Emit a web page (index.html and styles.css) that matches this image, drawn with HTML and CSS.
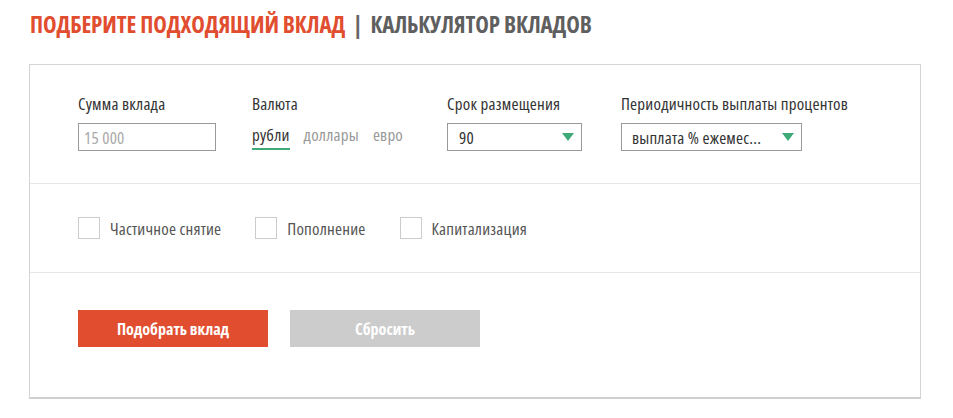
FILE: index.html
```html
<!DOCTYPE html>
<html lang="ru">
<head>
<meta charset="UTF-8" />
<meta name="viewport" content="width=device-width, initial-scale=1" />
<title>Калькулятор вкладов</title>
<link rel="stylesheet" href="styles.css">
</head>
<body>

<div class="page">
  <h1 class="page-title">
    <span class="title-accent">Подберите подходящий вклад</span>
    <span class="title-sep">|</span>
    <span class="title-sub">Калькулятор вкладов</span>
  </h1>

  <div class="calc">
    <div class="calc-section calc-fields">
      <div class="field">
        <div class="field-label">Сумма вклада</div>
        <input class="text-input" type="text" placeholder="15 000" />
      </div>
      <div class="field">
        <div class="field-label">Валюта</div>
        <div class="tabs">
          <span class="tab active">рубли</span>
          <span class="tab">доллары</span>
          <span class="tab">евро</span>
        </div>
      </div>
      <div class="field">
        <div class="field-label">Срок размещения</div>
        <div class="select select-term">
          <span>90</span>
          <span class="select-arrow"></span>
        </div>
      </div>
      <div class="field">
        <div class="field-label">Периодичность выплаты процентов</div>
        <div class="select select-period">
          <span>выплата % ежемес...</span>
          <span class="select-arrow"></span>
        </div>
      </div>
    </div>

    <div class="calc-section calc-options">
      <label class="check"><span class="check-box"></span>Частичное снятие</label>
      <label class="check"><span class="check-box"></span>Пополнение</label>
      <label class="check"><span class="check-box"></span>Капитализация</label>
    </div>

    <div class="calc-section calc-actions">
      <button class="btn btn-primary">Подобрать вклад</button>
      <button class="btn btn-reset">Сбросить</button>
    </div>
  </div>
</div>

</body>
</html>
```

FILE: styles.css
```css
body {
  margin: 0;
  padding: 0;
  background: #fff;
  font-family: "Open Sans", "DejaVu Sans Condensed", sans-serif;
  font-stretch: 75%;
  color: #333;
}
.page {
  padding: 0 33px 0 29px;
}
.page-title {
  margin: 0;
  padding: 9px 0 0 1px;
  height: 64px;
  box-sizing: border-box;
  font-size: 23px;
  font-weight: bold;
  text-transform: uppercase;
  line-height: 30px;
  letter-spacing: -0.1px;
}
.title-accent {
  color: #e14d2f;
}
.title-sep {
  color: #666;
  margin: 0 4px;
}
.title-sub {
  color: #5f5f5f;
}
.calc {
  border: 1px solid #d4d4d4;
  border-bottom: 2px solid #cfcfcf;
  width: 890px;
  font-size: 17px;
  letter-spacing: 0.2px;
}
.calc-section {
  border-top: 1px solid #e6e6e6;
  padding-left: 48px;
}
.calc-section:first-child {
  border-top: none;
}
.calc-fields {
  display: grid;
  grid-template-columns: 174px 195px 174px auto;
  height: 118px;
  padding-top: 29px;
  box-sizing: border-box;
}
.field-label {
  line-height: 20px;
  color: #333;
  margin-bottom: 9px;
}
.text-input {
  box-sizing: border-box;
  width: 138px;
  height: 28px;
  border: 1px solid #999;
  padding: 0 5px;
  font-family: inherit;
  font-stretch: 75%;
  font-size: 17px;
  letter-spacing: 0.2px;
  color: #333;
  outline: none;
}
.text-input::placeholder {
  color: #aaa;
}
.tabs {
  display: flex;
  gap: 14px;
  line-height: 20px;
  padding-top: 2px;
}
.tab {
  color: #999;
  padding-bottom: 3px;
}
.tab.active {
  color: #333;
  border-bottom: 2px solid #3daa77;
}
.select {
  box-sizing: border-box;
  height: 28px;
  border: 1px solid #999;
  display: flex;
  align-items: center;
  justify-content: space-between;
  color: #333;
  padding: 0 7px 0 11px;
}
.select-term {
  width: 135px;
}
.select-period {
  width: 181px;
  padding-left: 10px;
}
.select-arrow {
  width: 0;
  height: 0;
  border-left: 6px solid transparent;
  border-right: 6px solid transparent;
  border-top: 8px solid #3daa77;
}
.calc-options {
  display: flex;
  align-items: center;
  gap: 34px;
  height: 89px;
  box-sizing: border-box;
}
.check {
  display: flex;
  align-items: center;
  color: #555;
}
.check-box {
  box-sizing: border-box;
  width: 22px;
  height: 22px;
  border: 1px solid #ccc;
  margin-right: 10px;
}
.calc-actions {
  display: flex;
  gap: 22px;
  height: 125px;
  padding-top: 37px;
  box-sizing: border-box;
}
.btn {
  width: 190px;
  height: 37px;
  border: none;
  font-family: inherit;
  font-stretch: 75%;
  font-size: 16px;
  font-weight: bold;
  color: #fff;
}
.btn-primary {
  background: #e14d2f;
}
.btn-reset {
  background: #cccccc;
}
```
